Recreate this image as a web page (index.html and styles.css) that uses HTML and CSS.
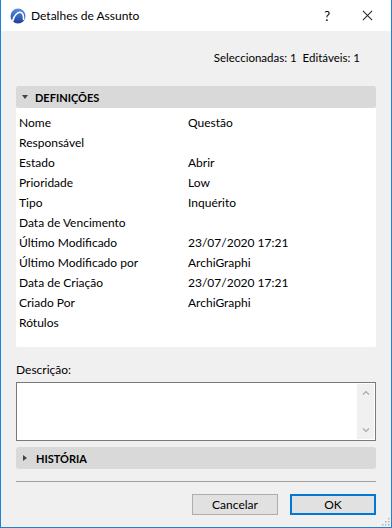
FILE: index.html
```html
<!DOCTYPE html>
<html lang="pt">
<head>
<meta charset="UTF-8">
<title>Detalhes de Assunto</title>
<link rel="stylesheet" href="styles.css">
</head>
<body>
<div class="window">
	<div class="titlebar">
		<svg class="app-icon" viewBox="0 0 16 16">
			<defs>
				<linearGradient id="g" x1="0" y1="0" x2="0" y2="1">
					<stop offset="0" stop-color="#5a8fe0"/>
					<stop offset="1" stop-color="#1c3f9e"/>
				</linearGradient>
			</defs>
			<circle cx="8" cy="8" r="7.5" fill="url(#g)"/>
			<path d="M2.5 13.5 C4 6.5 8.5 3.5 11 4.5 C13 5.3 13.8 8.5 13.5 12" fill="none" stroke="#fff" stroke-width="1.6"/>
		</svg>
		<span class="title">Detalhes de Assunto</span>
		<span class="help">?</span>
		<svg class="close" viewBox="0 0 12 12">
			<path d="M1 1 L11 11 M11 1 L1 11" stroke="#222" stroke-width="1.1"/>
		</svg>
	</div>
	<div class="content">
		<div class="counts">Seleccionadas: 1&nbsp;&nbsp;Editáveis: 1</div>

		<div class="section-head">
			<span class="tri-down"></span>DEFINIÇÕES
		</div>
		<div class="props">
			<div class="row"><span class="key">Nome</span><span>Questão</span></div>
			<div class="row"><span class="key">Responsável</span><span></span></div>
			<div class="row"><span class="key">Estado</span><span>Abrir</span></div>
			<div class="row"><span class="key">Prioridade</span><span>Low</span></div>
			<div class="row"><span class="key">Tipo</span><span>Inquérito</span></div>
			<div class="row"><span class="key">Data de Vencimento</span><span></span></div>
			<div class="row"><span class="key">Último Modificado</span><span>23/07/2020 17:21</span></div>
			<div class="row"><span class="key">Último Modificado por</span><span>ArchiGraphi</span></div>
			<div class="row"><span class="key">Data de Criação</span><span>23/07/2020 17:21</span></div>
			<div class="row"><span class="key">Criado Por</span><span>ArchiGraphi</span></div>
			<div class="row"><span class="key">Rótulos</span><span></span></div>
		</div>

		<div class="desc-label">Descrição:</div>
		<div class="desc-box">
			<div class="desc-text"></div>
			<div class="scroll">
				<svg viewBox="0 0 8 5"><path d="M1 4.5 L4 1.5 L7 4.5" fill="none" stroke="#a8a8a8" stroke-width="1.2"/></svg>
				<svg viewBox="0 0 8 5"><path d="M1 0.5 L4 3.5 L7 0.5" fill="none" stroke="#a8a8a8" stroke-width="1.2"/></svg>
			</div>
		</div>

		<div class="section-head history">
			<span class="tri-right"></span>HISTÓRIA
		</div>

		<div class="separator"></div>

		<div class="buttons">
			<button class="btn">Cancelar</button>
			<button class="btn default">OK</button>
		</div>
		<svg class="grip" viewBox="0 0 8 8">
			<rect x="6" y="0" width="1.5" height="1.5" fill="#b5b5b5"/>
			<rect x="3" y="3" width="1.5" height="1.5" fill="#b5b5b5"/>
			<rect x="6" y="3" width="1.5" height="1.5" fill="#b5b5b5"/>
			<rect x="0" y="6" width="1.5" height="1.5" fill="#b5b5b5"/>
			<rect x="3" y="6" width="1.5" height="1.5" fill="#b5b5b5"/>
			<rect x="6" y="6" width="1.5" height="1.5" fill="#b5b5b5"/>
		</svg>
	</div>
</div>
</body>
</html>
```

FILE: styles.css
```css
:root {
	--frame: #1883d7;
	--dialog-bg: #f0f0f0;
	--head-bg: #d9d9d9;
	--text: #000;
}
body {
	margin: 0;
	font-family: 'Lato', 'Open Sans', sans-serif;
	font-size: 12px;
	color: var(--text);
}
.window {
	width: 392px;
	height: 528px;
	box-sizing: border-box;
	border: 1px solid var(--frame);
	border-top: none;
	background-color: var(--dialog-bg);
	display: flex;
	flex-direction: column;
}
.titlebar {
	height: 31px;
	background-color: #fff;
	display: flex;
	align-items: center;
	flex-shrink: 0;
}
.app-icon {
	width: 16px;
	height: 16px;
	margin-left: 9px;
	margin-right: 5px;
}
.title {
	flex-grow: 1;
	font-size: 12px;
}
.help {
	font-size: 13px;
	margin-right: 32px;
}
.close {
	width: 11px;
	height: 11px;
	margin-right: 18px;
}
.content {
	position: relative;
	flex-grow: 1;
	padding: 0 15px;
	display: flex;
	flex-direction: column;
}
.counts {
	margin-top: 18px;
	height: 18px;
	line-height: 18px;
	text-align: right;
	padding-right: 16px;
	font-size: 11.5px;
}
.section-head {
	margin-top: 19px;
	height: 22px;
	background-color: var(--head-bg);
	border-radius: 3px;
	display: flex;
	align-items: center;
	font-weight: 700;
	font-size: 11px;
	padding-left: 6px;
}
.tri-down {
	width: 0;
	height: 0;
	border-left: 3.5px solid transparent;
	border-right: 3.5px solid transparent;
	border-top: 4px solid #444;
	margin-right: 7px;
}
.tri-right {
	width: 0;
	height: 0;
	border-top: 3.5px solid transparent;
	border-bottom: 3.5px solid transparent;
	border-left: 4px solid #444;
	margin-left: 1px;
	margin-right: 9px;
}
.props {
	background-color: #fff;
	padding: 5px 0 14px 3px;
	border-radius: 0 0 2px 2px;
}
.row {
	display: grid;
	grid-template-columns: 169px 1fr;
	height: 20px;
	line-height: 20px;
}
.desc-label {
	margin-top: 13px;
	height: 20px;
	line-height: 20px;
}
.desc-box {
	margin-top: 2px;
	height: 59px;
	box-sizing: border-box;
	border: 1px solid #7a7a7a;
	background-color: #fff;
	display: flex;
}
.desc-text {
	flex-grow: 1;
}
.scroll {
	width: 17px;
	margin: 1px 1px 1px 0;
	background-color: var(--dialog-bg);
	display: flex;
	flex-direction: column;
	justify-content: space-between;
	align-items: center;
	padding: 6px 0;
	box-sizing: border-box;
}
.scroll svg {
	width: 8px;
	height: 5px;
}
.section-head.history {
	margin-top: 6px;
}
.separator {
	margin-top: 12px;
	height: 1px;
	background-color: #a0a0a0;
}
.buttons {
	margin-top: 12px;
	display: flex;
	justify-content: flex-end;
	gap: 12px;
}
.btn {
	width: 86px;
	height: 21px;
	box-sizing: border-box;
	background-color: #e1e1e1;
	border: 1px solid #adadad;
	font-family: 'Lato', 'Open Sans', sans-serif;
	font-size: 12px;
	color: var(--text);
	padding: 0;
}
.btn.default {
	border: 2px solid #0078d7;
}
.grip {
	position: absolute;
	right: 1px;
	bottom: 1px;
	width: 8px;
	height: 8px;
}
```
